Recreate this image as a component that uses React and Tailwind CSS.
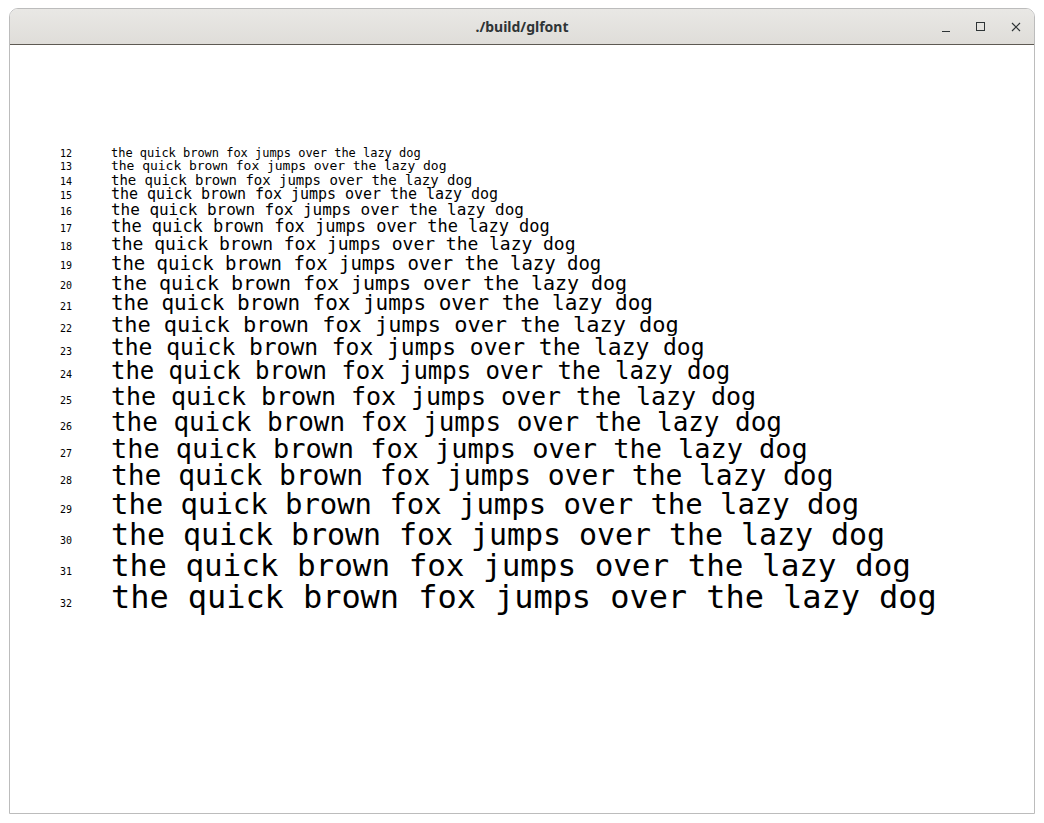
import React from "react";

const SIZES = [12, 13, 14, 15, 16, 17, 18, 19, 20, 21, 22, 23, 24, 25, 26, 27, 28, 29, 30, 31, 32];
const PHRASE = "the quick brown fox jumps over the lazy dog";

function TitleBar() {
  return (
    <div className="relative flex h-[36px] shrink-0 items-center justify-center rounded-t-[8px] border-b border-[#5e5a53] bg-gradient-to-b from-[#e9e8e5] to-[#dfddd9]">
      <div className="font-['Noto_Sans',sans-serif] text-[14px] font-bold text-[#2e3436]">./build/glfont</div>
      <div className="absolute right-[13px] top-0 flex h-full items-center gap-[25px]">
        {/* minimize */}
        <div className="flex h-[10px] w-[9px] items-end">
          <div className="h-[1px] w-[8px] bg-[#2e3436]" />
        </div>
        {/* maximize */}
        <div className="h-[9px] w-[9px] border border-[#2e3436]" />
        {/* close */}
        <svg width="10" height="10" viewBox="0 0 10 10" className="ml-[1px]">
          <path d="M1 1 L9 9 M9 1 L1 9" stroke="#2e3436" strokeWidth="1.2" />
        </svg>
      </div>
    </div>
  );
}

export default function App() {
  return (
    <div className="h-[823px] w-[1044px] overflow-hidden bg-white pl-[9px] pt-[8px]">
      <div className="flex h-[806px] w-[1026px] flex-col rounded-t-[9px] border border-[#bcbcbc] bg-white">
        <TitleBar />
        <div className="flex-1 bg-white pt-[102px] font-['DejaVu_Sans_Mono',monospace] text-black">
          {SIZES.map((s) => (
            <div key={s} className="flex items-end" style={{ height: s + 0.2 }}>
              <div
                className="w-[101px] shrink-0 pl-[50px] text-[10px] leading-[10px]"
                style={{ marginBottom: Math.round((s - 12) * 0.22) }}
              >
                {s}
              </div>
              <div className="whitespace-pre leading-none tracking-[-0.002em]" style={{ fontSize: s }}>
                {PHRASE}
              </div>
            </div>
          ))}
        </div>
      </div>
    </div>
  );
}
